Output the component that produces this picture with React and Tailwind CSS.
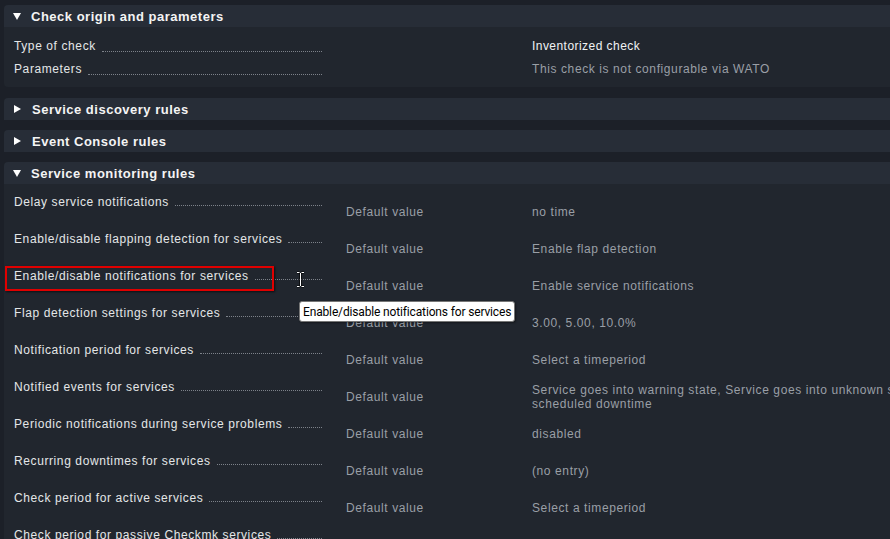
import React from "react";

const F = { fontFamily: '"Liberation Sans", Arial, sans-serif' };

function Tri({ open }) {
  return open ? (
    <svg width="8" height="7" viewBox="0 0 8 7" className="mr-[10px]"><path d="M0 0h8L4 7z" fill="#fff" /></svg>
  ) : (
    <svg width="7" height="8" viewBox="0 0 7 8" className="mr-[11px] ml-[1px]"><path d="M0 0l7 4-7 4z" fill="#fff" /></svg>
  );
}

function Header({ open, title }) {
  return (
    <div className="flex h-[22px] items-center bg-[#272d37] rounded-tl-[4px] pl-[9px]">
      <Tri open={open} />
      <span className="text-[13px] font-bold tracking-[0.5px] text-[#f4f4f4] pt-[1px]">{title}</span>
    </div>
  );
}

function Label({ text }) {
  return (
    <div className="flex w-[308px] shrink-0 items-end">
      <span className="whitespace-nowrap">{text}</span>
      <span className="ml-[6px] mb-[3px] flex-1 border-b border-dotted border-[#7d828a]" />
    </div>
  );
}

const rows = [
  ["Delay service notifications", "no time"],
  ["Enable/disable flapping detection for services", "Enable flap detection"],
  ["Enable/disable notifications for services", "Enable service notifications"],
  ["Flap detection settings for services", "3.00, 5.00, 10.0%"],
  ["Notification period for services", "Select a timeperiod"],
  ["Notified events for services", "Service goes into warning state, Service goes into unknown state,\nscheduled downtime"],
  ["Periodic notifications during service problems", "disabled"],
  ["Recurring downtimes for services", "(no entry)"],
  ["Check period for active services", "Select a timeperiod"],
  ["Check period for passive Checkmk services", "Select a timeperiod"],
];

export default function App() {
  return (
    <div className="relative h-[539px] w-[890px] overflow-hidden bg-[#1c2028] pt-[5px] pl-[4px]" style={F}>
      <div className="flex flex-col gap-[10px]">
        <div>
          <Header open title="Check origin and parameters" />
          <div className="bg-[#21262e] pt-[7px] pb-[7px] pl-[10px] text-[12px] tracking-[0.6px] rounded-bl-[4px]">
            <div className="flex h-[23px] items-center">
              <div className="shrink-0 text-[#e4e6e8]"><Label text="Type of check" /></div>
              <div className="ml-[210px] shrink-0 whitespace-nowrap text-[#f0f2f4] tracking-[0.45px]">Inventorized check</div>
            </div>
            <div className="flex h-[23px] items-center">
              <div className="shrink-0 text-[#e4e6e8]"><Label text="Parameters" /></div>
              <div className="ml-[210px] shrink-0 whitespace-nowrap text-[#9a9fa6]">This check is not configurable via WATO</div>
            </div>
          </div>
        </div>
        <div className="mt-[1px]"><Header title="Service discovery rules" /></div>
        <div><Header title="Event Console rules" /></div>
        <div>
          <Header open title="Service monitoring rules" />
          <div className="bg-[#21262e] pl-[10px] text-[12px] tracking-[0.6px]">
            {rows.map(([l, v], i) => (
              <div key={i} className="flex h-[37px]">
                <div className="shrink-0 pt-[11px] text-[#e4e6e8] leading-[14px]"><Label text={l} /></div>
                <div className="ml-[24px] flex h-full w-[186px] shrink-0 items-center pt-[19px] text-[#9a9fa6] leading-[14px] whitespace-nowrap">Default value</div>
                <div className="flex h-full shrink-0 items-center pt-[19px] text-[#9a9fa6] leading-[14px] whitespace-pre">{v}</div>
              </div>
            ))}
          </div>
        </div>
      </div>

      {/* red highlight box */}
      <div className="absolute left-[5px] top-[266px] h-[25px] w-[269px] border-2 border-[#e00000] shadow-[1px_1px_2px_rgba(0,0,0,0.6)]" />

      {/* I-beam cursor */}
      <svg className="absolute left-[296px] top-[271px]" width="9" height="17" viewBox="0 0 9 17">
        <path d="M1 1.5h2.5M5.5 1.5H8M4.5 2v13M1 15.5h2.5M5.5 15.5H8" stroke="#000" strokeWidth="2.2" />
        <path d="M1 1.5h2.5M5.5 1.5H8M4.5 2v13M1 15.5h2.5M5.5 15.5H8" stroke="#fff" strokeWidth="1" />
      </svg>

      {/* tooltip */}
      <div
        className="absolute left-[299px] top-[301px] flex h-[21px] items-center whitespace-nowrap rounded-[3px] border border-[#767676] bg-white px-[3px] text-[12px] tracking-[-0.15px] text-black shadow-[1px_1px_2px_rgba(0,0,0,0.4)]"
        style={{ fontFamily: 'Roboto, "Noto Sans", sans-serif' }}
      >
        Enable/disable notifications for services
      </div>
    </div>
  );
}
